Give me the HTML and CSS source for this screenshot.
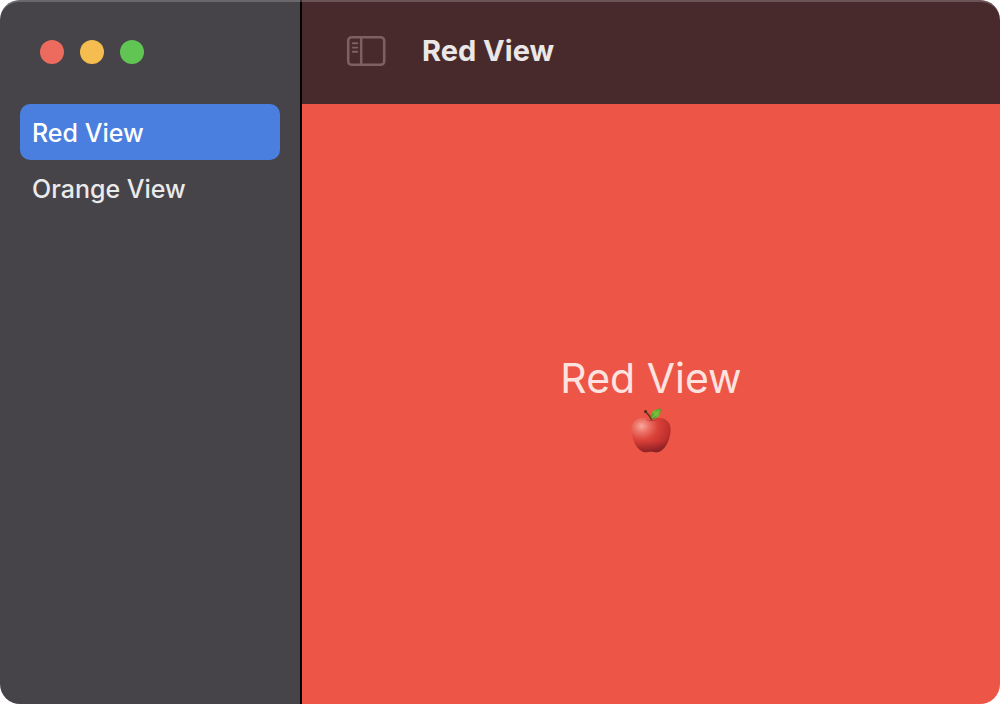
FILE: index.html
```
<!DOCTYPE html>
<html lang="en">
<head>
<meta charset="utf-8">
<title>Red View</title>
<link rel="stylesheet" href="styles.css">
</head>
<body>
<div class="window">
  <aside class="sidebar">
    <div class="traffic-lights">
      <button class="light light-close" type="button" aria-label="Close"></button>
      <button class="light light-minimize" type="button" aria-label="Minimize"></button>
      <button class="light light-zoom" type="button" aria-label="Zoom"></button>
    </div>
    <nav class="nav">
      <a class="nav-item nav-item-active" href="#red" aria-current="page">Red View</a>
      <a class="nav-item" href="#orange">Orange View</a>
    </nav>
  </aside>
  <div class="detail">
    <header class="toolbar">
      <button class="toggle" type="button" aria-label="Toggle sidebar">
        <svg width="40" height="32" viewBox="0 0 40 32" fill="none" stroke="currentColor">
          <rect x="4.200" y="2.200" width="36" height="27.600" rx="3.600" stroke-width="2.600" transform="translate(-2 0)"/>
          <path d="M15.200 2.500V29.500" stroke-width="2.500"/>
          <path d="M6.700 8.300h4.600M6.700 12.600h4.600M6.700 16.800h4.600" stroke-width="1.900" stroke-linecap="round"/>
        </svg>
      </button>
      <h1 class="title">Red View</h1>
    </header>
    <main class="content" id="red">
      <p class="label">Red View</p>
      <svg class="apple" role="img" aria-label="Red apple" width="44" height="48" viewBox="0 0 44 48">
        <defs>
          <radialGradient id="skin" cx="0.26" cy="0.24" r="0.86">
            <stop offset="0" stop-color="#f9a99c"/>
            <stop offset="0.2" stop-color="#ed7569"/>
            <stop offset="0.48" stop-color="#da4239"/>
            <stop offset="0.82" stop-color="#bf302e"/>
            <stop offset="1" stop-color="#982528"/>
          </radialGradient>
          <linearGradient id="base" x1="0" y1="0" x2="0" y2="1">
            <stop offset="0.68" stop-color="#701a20" stop-opacity="0"/>
            <stop offset="1" stop-color="#701a20" stop-opacity="0.55"/>
          </linearGradient>
          <linearGradient id="leaf" x1="0" y1="1" x2="1" y2="0">
            <stop offset="0" stop-color="#398e24"/>
            <stop offset="0.5" stop-color="#75bd39"/>
            <stop offset="1" stop-color="#469b2b"/>
          </linearGradient>
        </defs>
        <path d="M22 11.500C26 9.800 33 8.800 37 12C41.500 15 42.500 20 41 27C40 33 37 39 33 42C30 44.800 26 44.600 22 43.500C18 44.600 14 44.800 11 42C7 39 4 33 3 27C1.700 20 2.500 15 7 12C11 8.800 18 9.800 22 11.500Z" fill="url(#skin)"/>
        <path d="M22 11.500C26 9.800 33 8.800 37 12C41.500 15 42.500 20 41 27C40 33 37 39 33 42C30 44.800 26 44.600 22 43.500C18 44.600 14 44.800 11 42C7 39 4 33 3 27C1.700 20 2.500 15 7 12C11 8.800 18 9.800 22 11.500Z" fill="url(#base)"/>
        <path d="M18 11.800Q22 13.600 27 11.800" fill="none" stroke="#a92d2a" stroke-width="1.200" stroke-linecap="round" opacity="0.5"/>
        <path d="M22.500 11.500Q20 7 16.500 3.500" fill="none" stroke="#67351f" stroke-width="1.700" stroke-linecap="round"/>
        <circle cx="16.500" cy="3.500" r="1.500" fill="#4c2a1c"/>
        <path d="M22 10.500C20.500 5 24.500 1 31.500 0.500C32.500 7 29 11.500 22 10.500Z" fill="url(#leaf)"/>
        <path d="M23 9.800Q27.500 6.500 30.500 2" fill="none" stroke="#9ccd5b" stroke-width="0.700"/>
      </svg>
    </main>
  </div>
</div>
</body>
</html>
```

FILE: styles.css
```
* {
  box-sizing: border-box;
}

body {
  margin: 0;
  background: #fff;
  font-family: Inter, "Liberation Sans", sans-serif;
}

.window {
  position: relative;
  display: flex;
  min-height: 100vh;
  border-radius: 20px;
  overflow: hidden;
}

.window::after {
  content: "";
  position: absolute;
  inset: 0;
  border-top: 2px solid rgba(255, 255, 255, 0.2);
  border-radius: 20px;
  pointer-events: none;
}

.sidebar {
  flex: 0 0 302px;
  background: #464349;
  border-right: 2px solid #000;
}

.traffic-lights {
  display: flex;
  align-items: center;
  gap: 16px;
  height: 104px;
  padding: 0 40px;
}

.light {
  width: 24px;
  height: 24px;
  padding: 0;
  border: 0;
  border-radius: 50%;
}

.light-close {
  background: #ec6a5e;
}

.light-minimize {
  background: #f5bd4f;
}

.light-zoom {
  background: #61c554;
}

.nav {
  display: flex;
  flex-direction: column;
  padding: 0 20px;
}

.nav-item {
  padding: 2px 12px 0;
  border-radius: 10px;
  color: #eaeaea;
  font-size: 25px;
  font-weight: 500;
  line-height: 54px;
  text-decoration: none;
}

.nav-item-active {
  background: #4a7fe0;
  color: #fff;
}

.detail {
  flex: 1;
  display: flex;
  flex-direction: column;
}

.toolbar {
  display: flex;
  align-items: center;
  gap: 36px;
  height: 104px;
  padding: 0 44px 2px;
  background: #482a2c;
}

.toggle {
  display: flex;
  padding: 0;
  border: 0;
  background: none;
  color: #7c6062;
}

.title {
  margin: 0;
  color: #ebe7e7;
  font-size: 29px;
  font-weight: 700;
  line-height: 36px;
}

.content {
  flex: 1;
  display: flex;
  flex-direction: column;
  align-items: center;
  justify-content: center;
  gap: 4px;
  background: #ed5547;
}

.label {
  margin: 0;
  color: #fde3e0;
  font-size: 41px;
  line-height: 52px;
}

.apple {
  display: block;
}
```
